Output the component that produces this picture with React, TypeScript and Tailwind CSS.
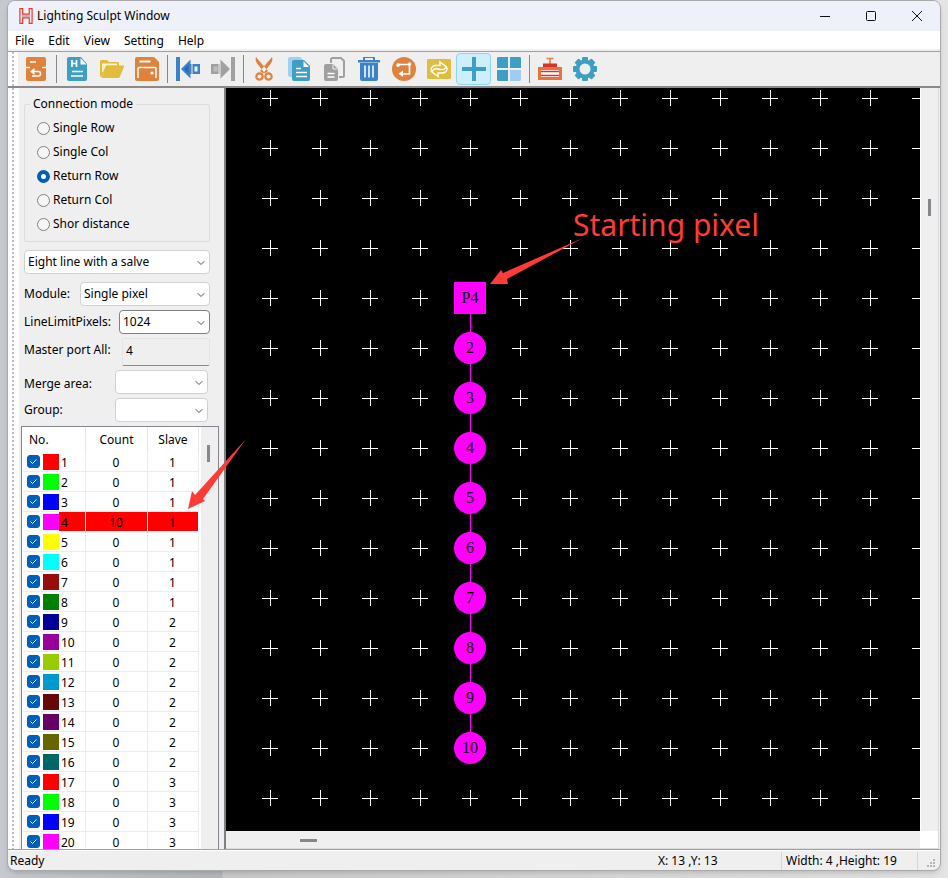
import { useState, type ReactNode } from "react";
import { ChevronDown } from "lucide-react";

const MENUS = ["File", "Edit", "View", "Setting", "Help"];
const MODES = ["Single Row", "Single Col", "Return Row", "Return Col", "Shor distance"];
const COLORS = [
  "#ff0000", "#00ff00", "#0000ff", "#ff00ff", "#ffff00", "#00ffff", "#990c0c", "#008000",
  "#000099", "#990099", "#99cc00", "#0099cc", "#660808", "#660066", "#666600", "#006666",
];
const PORTS = Array.from({ length: 20 }, (_, i) => ({
  no: i + 1,
  count: i === 3 ? 10 : 0,
  slave: Math.floor(i / 8) + 1,
  color: COLORS[i % COLORS.length],
}));
const PITCH = 50;
const NODES = Array.from({ length: 10 }, (_, i) => (i === 0 ? "P4" : String(i + 1)));

const ORANGE = "#e0813c";
const TEAL = "#3d9fc3";
const YELLOW = "#e0bd3e";
const BLUE = "#3b82c9";
const GREY = "#a0a0a0";

function Icon({ children }: { children: ReactNode }) {
  return (
    <svg width="24" height="24" viewBox="0 0 24 24" fill="none" aria-hidden="true">
      {children}
    </svg>
  );
}

type Tool = { name: string; icon: ReactNode } | null;

const TOOLS: Tool[] = [
  {
    name: "Back",
    icon: (
      <>
        <rect x="2" y="0" width="20" height="24" rx="2" fill={ORANGE} />
        <path d="M6 5h6M2 10.500h4M18 10.500h4" stroke="#fff" strokeWidth="1.500" />
        <path d="M7.500 14.500h7a2 2 0 0 1 2 2v.5a2 2 0 0 1-2 2H8" stroke="#fff" strokeWidth="1.600" />
        <path d="M10.500 11v7L6 14.500z" fill="#fff" />
      </>
    ),
  },
  null,
  {
    name: "New",
    icon: (
      <>
        <path d="M4 0h12l6 7v15a2 2 0 0 1-2 2H4a2 2 0 0 1-2-2V2a2 2 0 0 1 2-2z" fill={TEAL} />
        <path d="M15.500 1v6.500h6z" fill="#fff" />
        <path d="M7 3v7M11.500 3v7M7 6.500h4.500" stroke="#fff" strokeWidth="1.700" />
        <path d="M7 14.500h11M6 19h12" stroke="#fff" strokeWidth="1.600" />
      </>
    ),
  },
  {
    name: "Open",
    icon: (
      <>
        <path d="M0 4a1 1 0 0 1 1-1h6l2 2h9a1 1 0 0 1 1 1v3H7L2 19l-1 1a1 1 0 0 1-1-1z" fill={YELLOW} />
        <path d="M2 6.500h15v2H6l-3 6.500H2z" fill="#fbf3c8" />
        <path d="M6.500 8.500H23a1 1 0 0 1 1 1.300l-4 9.700a2 2 0 0 1-2 1.500H1.500z" fill={YELLOW} />
      </>
    ),
  },
  {
    name: "Save",
    icon: (
      <>
        <path d="M2 0h17l5 5v17a2 2 0 0 1-2 2H2a2 2 0 0 1-2-2V2a2 2 0 0 1 2-2z" fill={ORANGE} />
        <path d="M4.500 4.500h11" stroke="#fff" strokeWidth="1.800" />
        <path d="M3 21v-9.500a1 1 0 0 1 1-1h16a1 1 0 0 1 1 1V21" stroke="#fff" strokeWidth="1.500" />
        <circle cx="17" cy="16" r="1.600" fill="#fff" />
      </>
    ),
  },
  null,
  {
    name: "Previous",
    icon: (
      <>
        <path d="M0 0h4v24H0zM5 12L14.500 2.500v19zM14 7h10v10H14z" fill={BLUE} />
        <path d="M18.500 9.500h3v5h-3z" fill="#eff6ff" />
        <path d="M16 7v10" stroke="#efefef" strokeWidth="1" />
        <path d="M8 12l4.500-4.500v9z" fill="#2869b4" />
      </>
    ),
  },
  {
    name: "Next",
    icon: (
      <>
        <path d="M20 0h4v24h-4zM19 12L9.500 2.500v19zM0 7h10v10H0z" fill={GREY} />
        <path d="M2.500 9.500h4v5h-4z" fill="#bdbdbd" />
        <path d="M8 7v10" stroke="#efefef" strokeWidth="1" />
      </>
    ),
  },
  null,
  {
    name: "Cut",
    icon: (
      <>
        <path d="M4 0c-1 3 0 5 1.500 7l7.500 9.500 3-2.500zM20 0c1 3 0 5-1.500 7L11 16.500 8 14z" fill={ORANGE} />
        <circle cx="7.500" cy="19.500" r="3.200" stroke={ORANGE} strokeWidth="2.200" />
        <circle cx="16.500" cy="19.500" r="3.200" stroke={ORANGE} strokeWidth="2.200" />
        <circle cx="12" cy="13" r="1" fill="#fff" />
      </>
    ),
  },
  {
    name: "Copy",
    icon: (
      <>
        <path d="M3 0h10l3 3v17H3a2 2 0 0 1-2-2V2a2 2 0 0 1 2-2z" fill="#9fd0f2" />
        <path d="M7 3h10l6 6v13a2 2 0 0 1-2 2H7a2 2 0 0 1-2-2V5a2 2 0 0 1 2-2z" fill={TEAL} />
        <path d="M16.500 4v6H22z" fill="#fff" />
        <path d="M9 11.500h5M9 15.500h11M9 19.500h11" stroke="#fff" strokeWidth="1.500" />
      </>
    ),
  },
  {
    name: "Paste",
    icon: (
      <>
        <path d="M9 6V2.500A1.500 1.500 0 0 1 10.500 1H19l3 3v14.500a1.500 1.500 0 0 1-1.500 1.500H17" stroke={GREY} strokeWidth="2" />
        <path d="M4 7h7l5 5v10a2 2 0 0 1-2 2H4a2 2 0 0 1-2-2V9a2 2 0 0 1 2-2z" fill={GREY} />
        <path d="M11 7.500V12h4.500" stroke="#eee" strokeWidth="1" />
        <path d="M5.500 16.500h7M5.500 20h7" stroke="#fff" strokeWidth="1.400" />
      </>
    ),
  },
  {
    name: "Delete",
    icon: (
      <>
        <path d="M7 3V1.500A1.500 1.500 0 0 1 8.500 0h7A1.500 1.500 0 0 1 17 1.500V3" stroke={BLUE} strokeWidth="2" />
        <path d="M1 3h22v2.500H1zM3 6h18v16a2 2 0 0 1-2 2H5a2 2 0 0 1-2-2z" fill={BLUE} />
        <path d="M8 8.500v12M12 8.500v12M16 8.500v12" stroke="#e8f3ff" strokeWidth="1.700" />
      </>
    ),
  },
  {
    name: "Route",
    icon: (
      <>
        <circle cx="12" cy="12" r="12" fill={ORANGE} />
        <path d="M6 10V7.500h11.500v9.500H9" stroke="#fff" strokeWidth="1.700" />
        <circle cx="6" cy="8" r="1.800" fill="#fff" />
        <circle cx="17.500" cy="7" r="1.800" fill="#fff" />
        <path d="M11 13.500v6.500l-4.500-3.200z" fill="#fff" />
      </>
    ),
  },
  {
    name: "Swap",
    icon: (
      <>
        <rect x="0" y="2" width="24" height="20" rx="1" fill={YELLOW} />
        <path
          d="M4 13.500c0-3.500 2-5 5-5h4V5l6.500 5-3 2.500h-5M20 11c0 3.500-2 5-5 5h-4V19.500L4.500 14.500l3-2.500h5"
          stroke="#fff"
          strokeWidth="1.500"
        />
      </>
    ),
  },
  {
    name: "Grid",
    icon: <path d="M12 0v24M0 12h24" stroke={TEAL} strokeWidth="4" />,
  },
  {
    name: "Tiles",
    icon: (
      <>
        <path d="M1 0h10v11H0V1zM13 0h10l1 1v10H13zM0 13h11v11H1l-1-1z" fill={TEAL} />
        <path d="M13 13h11v10l-1 1H13z" fill="#9fcdf2" />
      </>
    ),
  },
  null,
  {
    name: "Controller",
    icon: (
      <>
        <path d="M12 7V2M8.500 1.500h7" stroke={ORANGE} strokeWidth="1.600" />
        <path d="M5 6.500h14V10H5z" fill="#d3362b" />
        <path d="M0 10h24v13H0z" fill="#e8743a" />
        <path d="M3 13h18v7H3z" fill="#fff" />
        <path d="M3 14.500h18M3 18.500h18" stroke="#d3362b" strokeWidth="1.500" />
      </>
    ),
  },
  {
    name: "Options",
    icon: (
      <>
        {[0, 45, 90, 135].map((a) => (
          <rect key={a} x="9" y="0" width="6" height="24" rx="1" fill={TEAL} transform={`rotate(${a} 12 12)`} />
        ))}
        <circle cx="12" cy="12" r="9.500" fill={TEAL} />
        <circle cx="12" cy="12" r="5.500" fill="#efefef" />
      </>
    ),
  },
];

function Grip({ className }: { className: string }) {
  return (
    <div className={`shrink-0 bg-white pl-1 ${className}`}>
      <div className="h-full w-0.5 bg-[repeating-linear-gradient(to_bottom,#c0c0c0_0_2px,#ffffff_2px_4px)]" />
    </div>
  );
}

function Combo({ id, value, className = "", strong = false }: { id: string; value: string; className?: string; strong?: boolean }) {
  return (
    <div className={`relative ${className}`}>
      <select
        id={id}
        aria-label={id}
        defaultValue={value}
        className={`block h-6 w-full appearance-none rounded-sm border bg-white pr-5 pl-[3px] text-[12px] leading-5 ${
          strong ? "border-[#7f8187]" : "border-[#d0d0d0]"
        }`}
      >
        <option value={value}>{value}</option>
      </select>
      <ChevronDown className="pointer-events-none absolute top-[7px] right-[3px] size-3" strokeWidth={2} color="#505050" />
    </div>
  );
}

function Sidebar() {
  const [mode, setMode] = useState("Return Row");
  return (
    <aside className="flex w-[205px] shrink-0 flex-col bg-[#efefef] pt-2 text-[12px] leading-5">
      <div className="flex flex-col pr-3.5 pl-[5px]">
        <fieldset className="h-[146px] rounded-xs border border-[#dcdcdc] pl-3">
          <legend className="-ml-[7px] px-[3px] leading-4">Connection mode</legend>
          <div className="flex flex-col pt-1">
            {MODES.map((m) => (
              <label key={m} className="flex h-6 items-center gap-[3px]">
                <input
                  type="radio"
                  name="mode"
                  checked={mode === m}
                  onChange={() => setMode(m)}
                  className="size-[13px] appearance-none rounded-full border border-[#808080] bg-[#f6f6f6] checked:border-4 checked:border-[#005fb8] checked:bg-white"
                />
                {m}
              </label>
            ))}
          </div>
        </fieldset>
        <Combo id="Line type" value="Eight line with a salve" className="mt-2" />
        <div className="mt-2 flex items-center justify-between">
          <label htmlFor="Module">Module:</label>
          <Combo id="Module" value="Single pixel" className="w-[130px]" />
        </div>
        <div className="mt-1 flex items-center justify-between">
          <label htmlFor="LineLimitPixels">LineLimitPixels:</label>
          <Combo id="LineLimitPixels" value="1024" className="w-[91px]" strong />
        </div>
        <div className="mt-1 flex items-center justify-between">
          <label htmlFor="master" className="pb-1">Master port All:</label>
          <input
            id="master"
            defaultValue="4"
            className="h-7 w-[88px] rounded-xs border border-[#e4e4e4] border-b-[#8a8a8a] bg-[#efefef] px-[3px] pb-1"
          />
        </div>
        <div className="mt-1 flex items-center justify-between pr-0.5">
          <label htmlFor="Merge area" className="pt-1">Merge area:</label>
          <Combo id="Merge area" value="" className="w-[93px]" />
        </div>
        <div className="mt-1 flex items-center justify-between pr-0.5">
          <label htmlFor="Group">Group:</label>
          <Combo id="Group" value="" className="w-[93px]" />
        </div>
      </div>
      <div className="mt-1 mr-[5px] ml-0.5 flex min-h-0 flex-1 overflow-hidden border border-b-0 border-[#828790] bg-white">
        <div className="min-h-0 flex-1 overflow-hidden pl-px">
          <table className="w-[176px] table-fixed border-separate border-spacing-0 text-center">
            <thead>
              <tr className="h-[25px]">
                <th className="w-[63px] border-r border-[#e5e5e5] pl-1.5 text-left font-normal">No.</th>
                <th className="w-[62px] border-r border-[#e5e5e5] font-normal">Count</th>
                <th className="w-[51px] border-r border-[#e5e5e5] font-normal">Slave</th>
              </tr>
            </thead>
            <tbody>
              {PORTS.map((p) => {
                const hot = p.no === 4;
                const line = hot ? "border-white" : "border-[#ececec]";
                const fill = hot ? "bg-[#ff0000]" : "";
                const cell = `border-r border-b p-0 pt-0.5 pr-px leading-[17px] ${line} ${fill}`;
                return (
                  <tr key={p.no} className="h-5">
                    <td className={`border-r border-b p-0 ${line}`}>
                      <label className="flex h-[19px] items-center">
                        <span className="grid w-5 shrink-0 place-items-center">
                          <input
                            type="checkbox"
                            defaultChecked
                            aria-label={`Port ${p.no}`}
                            className="col-start-1 row-start-1 size-[13px] appearance-none rounded-[3px] border border-[#808080] checked:border-[#005fb8] checked:bg-[#005fb8]"
                          />
                          <svg className="pointer-events-none col-start-1 row-start-1" width="9" height="9" viewBox="0 0 9 9" fill="none">
                            <path d="M1.500 4.500l2 2 4-4" stroke="#fff" strokeWidth="1" />
                          </svg>
                        </span>
                        <span className="mt-0.5 size-4 shrink-0 self-start" style={{ backgroundColor: p.color }} />
                        <span className={`h-[19px] flex-1 pt-0.5 pl-0.5 text-left leading-[17px] ${fill}`}>{p.no}</span>
                      </label>
                    </td>
                    <td className={cell}>{p.count}</td>
                    <td className={cell}>{p.slave}</td>
                  </tr>
                );
              })}
            </tbody>
          </table>
        </div>
        <div className="w-[17px] shrink-0 bg-[#efefef] pt-[18px] pl-1.5">
          <div className="h-[17px] w-[3px] bg-[#86868c]" />
        </div>
      </div>
    </aside>
  );
}

function Board() {
  return (
    <section className="flex min-w-0 flex-1 flex-col border-l-2 border-[#808080]">
      <div className="flex min-h-0 flex-1">
        <div className="relative min-w-0 flex-1 overflow-hidden bg-black">
          <svg className="absolute inset-0 size-full" shapeRendering="crispEdges">
            <defs>
              <pattern id="cross" x="19" y="-15" width={PITCH} height={PITCH} patternUnits="userSpaceOnUse">
                <path d="M17 25h16v1h-16zM25 17h1v16h-1z" fill="#fff" />
              </pattern>
            </defs>
            <rect x="19" y="0" width="100%" height="735" fill="url(#cross)" />
            <rect x="244" y="210" width="1" height="450" fill="#ff00ff" />
          </svg>
          <div className="absolute top-[194px] left-[228px] flex flex-col gap-[18px]">
            {NODES.map((n, i) => (
              <div
                key={n}
                className={`flex size-8 items-center justify-center bg-[#ff00ff] font-['Liberation_Serif',serif] text-[16px] text-black ${
                  i === 0 ? "" : "rounded-full"
                }`}
              >
                {n}
              </div>
            ))}
          </div>
          <p className="absolute top-[117px] left-[347px] text-[30px] leading-10 whitespace-nowrap text-[#fd3c37]">Starting pixel</p>
        </div>
        <div className="w-[19px] shrink-0 border-r border-l border-r-[#dcdcdc] border-l-white bg-[#efefef] pt-[111px] pl-[7px]">
          <div className="h-[17px] w-[3px] bg-[#86868c]" />
        </div>
      </div>
      <div className="flex h-[18px] shrink-0 border-b border-[#dcdcdc]">
        <div className="flex-1 bg-[#efefef] pt-2 pl-[74px]">
          <div className="h-[3px] w-[17px] bg-[#86868c]" />
        </div>
        <div className="w-[19px] border-r border-[#dcdcdc] bg-white" />
      </div>
    </section>
  );
}

export default function App() {
  return (
    <div className="flex h-screen bg-[linear-gradient(to_right,#c6c9cd,#b4b6ba_222px,#c9c9c9_223px,#e4e4e4)] px-[7px] pb-[7px] font-['Noto_Sans','Open_Sans',sans-serif] text-black">
      <div className="flex min-w-0 flex-1 flex-col overflow-hidden rounded-lg border border-[#a9a9ab] bg-[#efefef] shadow-md">
        <header className="flex h-[30px] shrink-0 items-center bg-[#eff1fa]">
          <svg className="ml-[11px]" width="14" height="16" viewBox="0 0 15 17" fill="none" aria-hidden="true">
            <path d="M3 7.500h9v2H3z" fill="#b8b8b8" />
            <path d="M1 .7h3v5.800h7V.7h3v15.600h-3v-5.800H4v5.800H1z" stroke="#f0352b" strokeWidth="1.300" />
          </svg>
          <h1 className="ml-1 flex-1 text-[12px]">Lighting Sculpt Window</h1>
          <button aria-label="Minimize" className="flex h-full w-[46px] items-center justify-center">
            <svg width="10" height="10" fill="none" stroke="#111"><path d="M0 5.500h10" /></svg>
          </button>
          <button aria-label="Maximize" className="flex h-full w-[46px] items-center justify-center">
            <svg width="10" height="10" fill="none" stroke="#111"><rect x=".5" y=".5" width="9" height="9" rx="1" /></svg>
          </button>
          <button aria-label="Close" className="flex h-full w-[46px] items-center justify-center">
            <svg width="10" height="10" fill="none" stroke="#111"><path d="M0 0l10 10M10 0L0 10" /></svg>
          </button>
        </header>
        <nav className="flex h-[18px] shrink-0 items-center bg-white pt-0.5 text-[12px]">
          {MENUS.map((m) => (
            <button key={m} className="px-[7px]">{m}</button>
          ))}
        </nav>
        <div className="mt-0.5 flex h-[37px] shrink-0 border-t border-b-2 border-[#a0a0a0] border-b-[#8a8a8a]">
          <Grip className="w-2.5" />
          <div className="flex flex-1 items-center" role="toolbar">
            {TOOLS.map((t, i) =>
              t ? (
                <button
                  key={t.name}
                  aria-label={t.name}
                  className={`flex h-8 w-[35px] items-center justify-center ${
                    t.name === "Grid" ? "rounded-sm border border-[#92d3ef] bg-[#cdeefb]" : ""
                  }`}
                >
                  <Icon>{t.icon}</Icon>
                </button>
              ) : (
                <span key={i} className="flex w-1.5 justify-center">
                  <span className="h-7 w-px bg-[#85878f]" />
                </span>
              ),
            )}
          </div>
        </div>
        <main className="relative flex min-h-0 flex-1 pr-px">
          <Grip className="w-[11px]" />
          <Sidebar />
          <Board />
          <svg className="pointer-events-none absolute top-0 left-0" width="600" height="440" fill="#fd3c37" aria-hidden="true">
            <path d="M482 196l11-14 2 3 80-35-76 41 1 5z" />
            <path d="M180 421l4-18 3 4 51-56-43 60 2 2z" />
          </svg>
        </main>
        <footer className="flex h-[21px] shrink-0 items-center border-t border-[#a0a0a0] text-[12px]">
          <div className="flex h-full flex-1 items-center border-t border-white pt-px">
            <span className="flex-1 pl-0.5">Ready</span>
            <span className="w-[124px] border-r border-[#d5d5d5]">X: 13 ,Y: 13</span>
            <span className="w-[136px] border-r border-[#d5d5d5] pl-1">Width: 4 ,Height: 19</span>
            <span className="flex w-[22px] justify-end self-end pr-1 pb-0.5">
              <svg width="9" height="9" fill="#b5b5b5" aria-hidden="true">
                <path d="M6 0h2v2h-2zM6 3h2v2h-2zM3 3h2v2h-2zM6 6h2v2h-2zM3 6h2v2h-2zM0 6h2v2h-2z" />
              </svg>
            </span>
          </div>
        </footer>
      </div>
    </div>
  );
}
